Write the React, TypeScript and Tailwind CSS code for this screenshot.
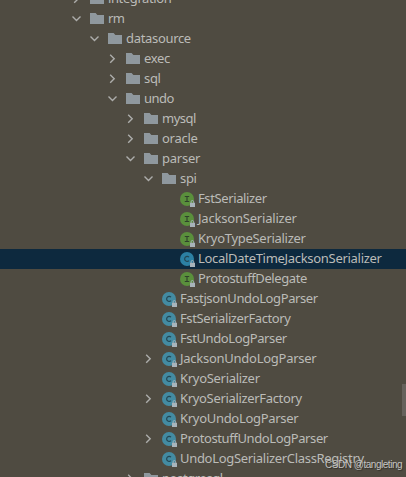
import React from "react";

type Kind = "folder" | "interface" | "class";

interface TreeNode {
  name: string;
  kind: Kind;
  // left padding of the row, one step per package level
  indent: string;
  tracking?: string;
  state?: "open" | "closed";
  selected?: boolean;
}

const nodes: TreeNode[] = [
  { name: "integration", kind: "folder", indent: "pl-[70px]", tracking: "tracking-[-0.4px]", state: "closed" },
  { name: "rm", kind: "folder", indent: "pl-[70px]", tracking: "tracking-[-0.6px]", state: "open" },
  { name: "datasource", kind: "folder", indent: "pl-[88px]", tracking: "tracking-[-0.32px]", state: "open" },
  { name: "exec", kind: "folder", indent: "pl-[106px]", tracking: "tracking-[-0.3px]", state: "closed" },
  { name: "sql", kind: "folder", indent: "pl-[106px]", tracking: "tracking-[-0.3px]", state: "closed" },
  { name: "undo", kind: "folder", indent: "pl-[106px]", tracking: "tracking-[-0.5px]", state: "open" },
  { name: "mysql", kind: "folder", indent: "pl-[124px]", tracking: "tracking-[-0.5px]", state: "closed" },
  { name: "oracle", kind: "folder", indent: "pl-[124px]", tracking: "tracking-[-0.25px]", state: "closed" },
  { name: "parser", kind: "folder", indent: "pl-[124px]", tracking: "tracking-[-0.25px]", state: "open" },
  { name: "spi", kind: "folder", indent: "pl-[142px]", tracking: "tracking-[-0.3px]", state: "open" },
  { name: "FstSerializer", kind: "interface", indent: "pl-[160px]", tracking: "tracking-[-0.38px]" },
  { name: "JacksonSerializer", kind: "interface", indent: "pl-[160px]", tracking: "tracking-[-0.2px]" },
  { name: "KryoTypeSerializer", kind: "interface", indent: "pl-[160px]", tracking: "tracking-[-0.29px]" },
  { name: "LocalDateTimeJacksonSerializer", kind: "class", indent: "pl-[160px]", tracking: "tracking-[-0.3px]", selected: true },
  { name: "ProtostuffDelegate", kind: "interface", indent: "pl-[160px]", tracking: "tracking-[-0.4px]" },
  { name: "FastjsonUndoLogParser", kind: "class", indent: "pl-[142px]", tracking: "tracking-[-0.39px]" },
  { name: "FstSerializerFactory", kind: "class", indent: "pl-[142px]", tracking: "tracking-[-0.4px]" },
  { name: "FstUndoLogParser", kind: "class", indent: "pl-[142px]", tracking: "tracking-[-0.4px]" },
  { name: "JacksonUndoLogParser", kind: "class", indent: "pl-[142px]", tracking: "tracking-[-0.26px]", state: "closed" },
  { name: "KryoSerializer", kind: "class", indent: "pl-[142px]", tracking: "tracking-[-0.3px]" },
  { name: "KryoSerializerFactory", kind: "class", indent: "pl-[142px]", tracking: "tracking-[-0.33px]", state: "closed" },
  { name: "KryoUndoLogParser", kind: "class", indent: "pl-[142px]", tracking: "tracking-[-0.3px]" },
  { name: "ProtostuffUndoLogParser", kind: "class", indent: "pl-[142px]", tracking: "tracking-[-0.39px]", state: "closed" },
  { name: "UndoLogSerializerClassRegistry", kind: "class", indent: "pl-[142px]", tracking: "tracking-[-0.31px]" },
  { name: "postgresql", kind: "folder", indent: "pl-[124px]", tracking: "tracking-[-0.4px]", state: "closed" },
];

const Chevron: React.FC<{ state?: "open" | "closed" }> = ({ state }) => (
  <svg className="w-3 h-3 shrink-0" viewBox="0 0 12 12" fill="none" stroke="#adadab" strokeWidth="1.4">
    {state === "open" && <path d="M2.5 3.5 6.5 7.5 10.5 3.5" />}
    {state === "closed" && <path d="M4.2 1.8 8.2 5.8 4.2 9.8" />}
  </svg>
);

const FolderIcon = () => (
  <svg className="w-4 h-4 shrink-0" viewBox="0 0 16 16">
    <path d="M1 2H6.6L8.4 4H15V13H1Z" fill="#8f989e" />
  </svg>
);

const TypeIcon: React.FC<{ kind: Kind; selected?: boolean }> = ({ kind, selected }) => (
  <svg className="w-4 h-4 shrink-0" viewBox="0 0 16 16">
    <circle cx="8" cy="8" r="7" fill={kind === "interface" ? "#5a8f3c" : selected ? "#2c80a3" : "#438ba2"} />
    {kind === "interface" ? (
      <path d="M5.8 5.5H10.2M8 5.5V10.5M5.8 10.5H10.2" stroke="#2f402b" strokeWidth="1.1" fill="none" />
    ) : (
      <path d="M10 6.2A2.5 2.5 0 1 0 10 9.6" stroke="#234653" strokeWidth="1.2" fill="none" />
    )}
    {/* package-private lock */}
    <path d="M12.1 12V10.8A1.3 1.3 0 0 1 14.7 10.8V12" stroke="#a8b3ba" strokeWidth="0.9" fill="none" />
    <path d="M11 11.8H16V16H11Z" fill="#a8b3ba" />
  </svg>
);

const TreeRow: React.FC<{ node: TreeNode }> = ({ node }) => (
  <div
    className={`flex items-center h-5 shrink-0 ${node.indent} ${node.selected ? "bg-[#0d293e]" : ""}`}
  >
    <Chevron state={node.state} />
    <div className="ml-[7px] flex items-center">
      {node.kind === "folder" ? <FolderIcon /> : <TypeIcon kind={node.kind} selected={node.selected} />}
    </div>
    <span className={`ml-[3px] pb-0.5 leading-5 whitespace-nowrap ${node.tracking ?? ""}`}>{node.name}</span>
  </div>
);

const App = () => {
  return (
    <div className="relative w-[406px] h-[477px] overflow-hidden bg-[#4f4b41] text-[#bbbbb8] text-[13px] font-['Noto_Sans',sans-serif]">
      <div className="flex flex-col -mt-[11px]">
        {nodes.map((node) => (
          <TreeRow key={node.name} node={node} />
        ))}
      </div>

      {/* Scrollbar thumb */}
      <div className="absolute right-0 top-[384px] w-1 h-8 bg-[#66625c]" />

      <div className="absolute left-[325px] top-[457px] text-[10px] leading-4 tracking-[-0.47px] whitespace-nowrap text-[#c6c5c2] [text-shadow:1px_1px_1px_#00000066] font-['Liberation_Sans',sans-serif]">
        CSDN @tangleting
      </div>
    </div>
  );
};

export default App;
